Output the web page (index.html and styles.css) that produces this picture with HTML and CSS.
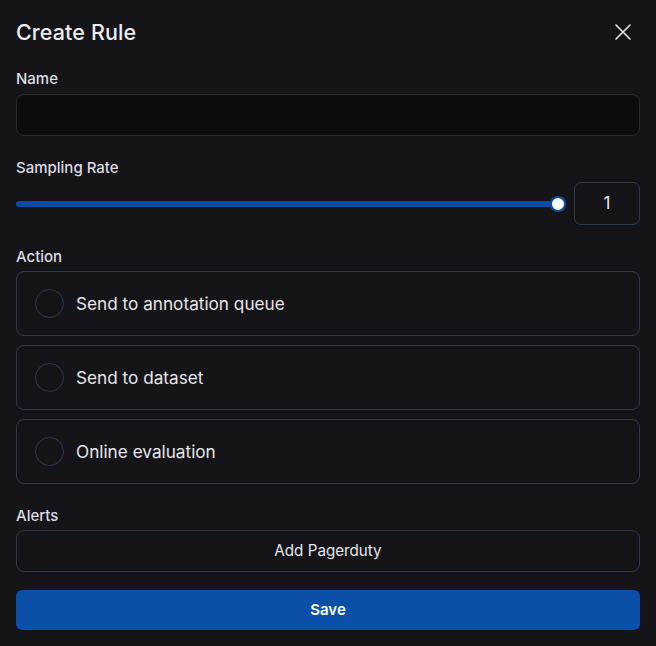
FILE: index.html
```html
<!DOCTYPE html>
<html>
<head>
<meta charset="utf-8">
<link rel="stylesheet" href="styles.css">
</head>
<body>
<div class="dialog">
  <div class="header">
    <h1 class="title">Create Rule</h1>
    <button class="close" aria-label="Close">
      <svg width="18" height="18" viewBox="0 0 18 18"><path d="M2 2L16 16M16 2L2 16" stroke="#e6e6ea" stroke-width="1.6" stroke-linecap="round"/></svg>
    </button>
  </div>
  <div class="field field-name">
    <label class="label">Name</label>
    <div class="input"></div>
  </div>
  <div class="field">
    <label class="label">Sampling Rate</label>
    <div class="slider-row">
      <div class="slider">
        <div class="track"></div>
        <div class="thumb"></div>
      </div>
      <div class="num">1</div>
    </div>
  </div>
  <div class="field">
    <label class="label">Action</label>
    <div class="cards">
      <div class="card"><span class="radio"></span><span class="card-text">Send to annotation queue</span></div>
      <div class="card"><span class="radio"></span><span class="card-text">Send to dataset</span></div>
      <div class="card"><span class="radio"></span><span class="card-text">Online evaluation</span></div>
    </div>
  </div>
  <div class="field">
    <label class="label">Alerts</label>
    <button class="btn-outline">Add Pagerduty</button>
  </div>
  <button class="btn-primary">Save</button>
</div>
</body>
</html>
```
FILE: styles.css
```css
* { box-sizing: border-box; }
html, body { margin: 0; padding: 0; background: #151519; }
body { font-family: Inter, "Noto Sans", sans-serif; color: #e6e6ea; }
.dialog { width: 656px; height: 646px; padding: 16px; display: flex; flex-direction: column; }
.header { display: flex; justify-content: space-between; align-items: center; height: 34px; }
.title { margin: 0; font-size: 21.5px; font-weight: 500; color: #ececf0; letter-spacing: 0.1px; }
.close { background: none; border: 0; padding: 0; width: 18px; height: 18px; margin-right: 8px; display: flex; }
.field { display: flex; flex-direction: column; margin-top: 23px; }
.field-name { margin-top: 22px; }
.label { font-size: 15px; font-weight: 500; color: #dcdce2; line-height: 18px; margin-bottom: 4px; }
.input { margin-top: 2px; height: 42px; background: #0c0c10; border: 1px solid #2a2a31; border-radius: 8px; }
.slider-row { margin-top: 1px; display: flex; align-items: center; gap: 10px; }
.slider { flex: 1; position: relative; height: 16px; margin-top: 2px; display: flex; align-items: center; }
.track { flex: 1; height: 6px; background: #0b4da6; border-radius: 3px; }
.thumb { position: absolute; right: -2px; top: 0; width: 16px; height: 16px; border-radius: 50%; background: #fff; border: 2px solid #0b4da6; }
.num { width: 66px; height: 43px; border: 1px solid #2e3b4e; border-radius: 7px; display: flex; align-items: center; justify-content: center; font-size: 17px; color: #e6e6ea; }
.cards { margin-top: 1px; display: flex; flex-direction: column; gap: 9px; }
.card { height: 65px; border: 1px solid #2e3a4c; border-radius: 8px; display: flex; align-items: center; padding-left: 18px; }
.radio { width: 29px; height: 29px; border-radius: 50%; border: 1px solid #2c3b51; margin-right: 12px; }
.card-text { font-size: 17.2px; color: #e6e6ea; }
.btn-outline { margin-top: 1px; height: 42px; background: transparent; border: 1px solid #2e3a4c; border-radius: 8px; color: #e6e6ea; font-family: inherit; font-size: 15.2px; }
.btn-primary { margin-top: 18px; height: 43px; background: #0a4fa8; border: 0; border-radius: 6px; color: #fff; font-family: inherit; font-size: 15px; font-weight: 600; }
```
